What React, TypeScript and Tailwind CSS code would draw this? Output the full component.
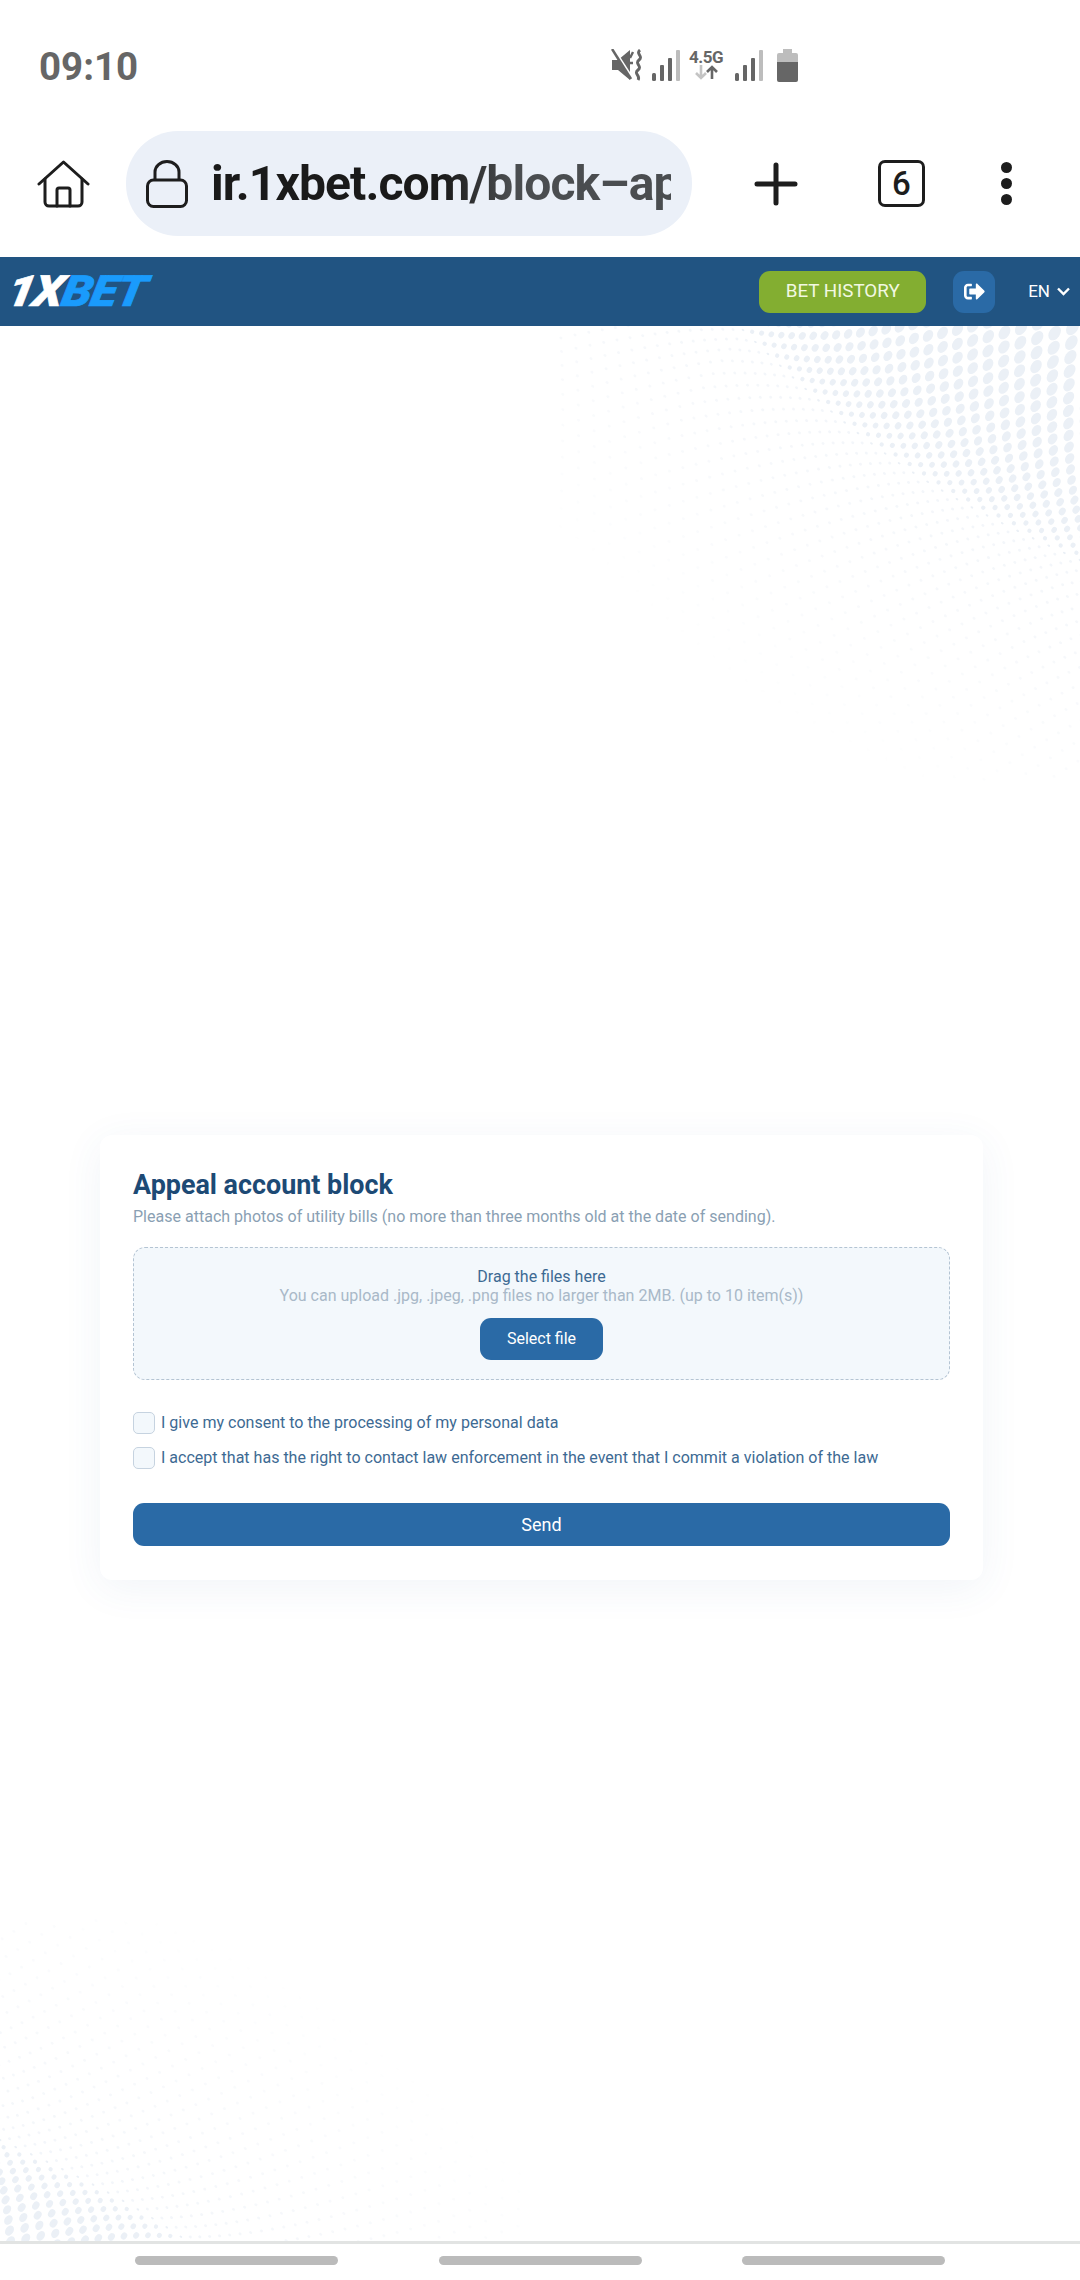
import { FaSignOutAlt } from "react-icons/fa";

type Dot = { x: number; y: number; rs: number; rd: number; o: number };

// halftone wave, one copy in the top right corner, the same one turned round for bottom left
const RIDGE = { x: 743, y: 330, ux: 0.826, uy: 0.564 };
const ANGLE = (Math.atan2(RIDGE.uy, RIDGE.ux) * 180) / Math.PI;

function buildDots() {
  const dots: Dot[] = [];
  for (let j = -26; j <= 26; j++) {
    const n = Math.abs(j);
    const dist = 5 * n + 0.2 * n * n;
    const d = j < 0 ? -dist : dist;
    for (let i = -30; i <= 70; i++) {
      const s = (i + (n % 2 ? 0.5 : 0)) * 17 * (1 + dist / 1500);
      const bend = s > 0 && s < 408 ? 22 * Math.sin((Math.PI * s) / 408) : 0;
      const x = RIDGE.x + s * RIDGE.ux + (d - bend) * RIDGE.uy;
      const y = RIDGE.y + s * RIDGE.uy - (d - bend) * RIDGE.ux;
      if (x < 560 || x > 1090 || y < 316 || y > 780) continue;
      if (j >= 0) {
        dots.push({ x, y, rs: 1.5 + 0.28 * Math.sqrt(dist), rd: 1 + 0.5 * Math.sqrt(dist), o: 1 });
      } else {
        const o = Math.max(0, 0.62 - dist / 480);
        if (o > 0) dots.push({ x, y, rs: 1.6, rd: 1.3, o });
      }
    }
  }
  return dots;
}

const DOTS = buildDots();

function Halftone() {
  const field = DOTS.map((p, k) => (
    <ellipse key={k} cx={p.x} cy={p.y} rx={p.rs} ry={p.rd} opacity={p.o} transform={`rotate(${ANGLE} ${p.x} ${p.y})`} />
  ));
  return (
    <svg className="absolute inset-0 h-full w-full" viewBox="0 326 1080 1915" fill="#ebf0f6">
      <g>{field}</g>
      <g transform="rotate(180 540 1350)">{field}</g>
    </svg>
  );
}

function Signal() {
  return (
    <svg width="28" height="31" viewBox="0 0 28 31">
      <rect x="0" y="23" width="4" height="8" rx="1.5" fill="#666" />
      <rect x="8" y="15" width="4" height="16" rx="1" fill="#666" />
      <rect x="16" y="8" width="4" height="23" rx="1" fill="#666" />
      <rect x="24" y="0" width="4" height="31" rx="1" fill="#bdbdbd" />
    </svg>
  );
}

function StatusIcons() {
  return (
    <div className="ml-[474px] flex items-start">
      <svg width="32" height="32" viewBox="0 0 32 32" className="mt-[-1px]">
        <path d="M1 11h6L19 1v30L7 21H1z" fill="#666" />
        <path d="M3 1l20 31" stroke="#fff" strokeWidth="3" />
        <path d="M1 0l19 30" stroke="#666" strokeWidth="2.6" />
        <path d="M19 9l3-6M19 14h3" stroke="#666" strokeWidth="2.4" />
        <path d="M29 1c-5 4 4 6-1 10s4 6-1 10 3 5 0 10" fill="none" stroke="#666" strokeWidth="3" />
      </svg>
      <div className="ml-[9px]"><Signal /></div>
      <div className="ml-[9px] flex w-[34px] flex-col items-center">
        <span className="text-[17px] leading-[15px] font-bold tracking-[-0.5px] text-[#666]">4.5G</span>
        <svg width="24" height="15" viewBox="0 0 24 15">
          <path d="M7 0v12M2 8l5 5 5-5" fill="none" stroke="#c4c4c4" strokeWidth="2.6" />
          <path d="M18 14V2M13 7l5-5 5 5" fill="none" stroke="#666" strokeWidth="2.6" />
        </svg>
      </div>
      <div className="ml-[12px]"><Signal /></div>
      <svg width="21" height="33" viewBox="0 0 21 33" className="mt-[-1px] ml-[14px]">
        <path d="M6 0h9v4h4a2 2 0 0 1 2 2v8H0V6a2 2 0 0 1 2-2h4z" fill="#bdbdbd" />
        <path d="M0 13h21v18a2 2 0 0 1-2 2H2a2 2 0 0 1-2-2z" fill="#666" />
      </svg>
    </div>
  );
}

function BrowserBar() {
  return (
    <div className="flex h-[147px] items-center">
      <svg width="53" height="48" viewBox="0 0 53 48" className="ml-[37px]" fill="none" stroke="#1d1d1d" strokeWidth="3" strokeLinecap="round" strokeLinejoin="round">
        <path d="M2 24L26.5 2 51 24" />
        <path d="M8 19v23a4 4 0 0 0 4 4h29a4 4 0 0 0 4-4V19" />
        <path d="M20 46V30a2 2 0 0 1 2-2h9a2 2 0 0 1 2 2v16" />
      </svg>
      <div className="ml-[36px] flex h-[105px] w-[566px] items-center overflow-hidden rounded-[52px] bg-[#ebf0f8] pl-[20px]">
        <svg width="42" height="48" viewBox="0 0 42 48" className="shrink-0" fill="none" stroke="#1d1d1d" strokeWidth="3">
          <rect x="1.5" y="20" width="39" height="26.5" rx="6" />
          <path d="M9 20v-8a12 10.5 0 0 1 24 0v8" />
        </svg>
        <div className="ml-[23px] w-[460px] overflow-hidden bg-gradient-to-r from-[#1a1a1a] from-[50%] to-[#4a4d50] to-[65%] bg-clip-text text-[48px] leading-[60px] font-bold tracking-[-0.9px] whitespace-nowrap text-transparent">
          ir.1xbet.com/block–ap
        </div>
      </div>
      <svg width="44" height="44" viewBox="0 0 44 44" className="ml-[62px]" stroke="#1d1d1d" strokeWidth="5" strokeLinecap="round">
        <path d="M22 3v38M3 22h38" />
      </svg>
      <div className="ml-[80px] flex h-[47px] w-[47px] items-center justify-center rounded-[7px] border-[3px] border-[#1d1d1d] text-[33px] leading-none font-medium text-[#1d1d1d]">
        6
      </div>
      <div className="ml-[76px] flex flex-col gap-[5px]">
        <span className="h-[11px] w-[11px] rounded-full bg-[#1d1d1d]" />
        <span className="h-[11px] w-[11px] rounded-full bg-[#1d1d1d]" />
        <span className="h-[11px] w-[11px] rounded-full bg-[#1d1d1d]" />
      </div>
    </div>
  );
}

function SiteHeader() {
  return (
    <header className="flex h-[69px] items-center bg-[#215482] pl-[8px]">
      <div className="flex origin-left scale-x-[1.12] -skew-x-[10deg] text-[43px] leading-none font-black tracking-[-1px] italic [-webkit-text-stroke:0.7px]">
        <span className="text-white">1X</span>
        <span className="text-[#1a9bfc]">BET</span>
      </div>
      <div className="ml-auto flex h-[42px] w-[167px] items-center justify-center rounded-[11px] bg-[#83ae31] text-[18.8px] text-[#f2f8e2]">
        BET HISTORY
      </div>
      <div className="ml-[27px] flex h-[42px] w-[42px] items-center justify-center rounded-[11px] bg-[#2a6aa6] text-white">
        <FaSignOutAlt size={21} />
      </div>
      <span className="ml-[33px] text-[17px] text-white">EN</span>
      <svg width="13" height="9" viewBox="0 0 13 9" className="mr-[10px] ml-[7px]" fill="none" stroke="#fff" strokeWidth="2.4">
        <path d="M1 1.5l5.5 5.5L12 1.5" />
      </svg>
    </header>
  );
}

function Consent({ children }: { children: string }) {
  return (
    <label className="flex h-[21px] items-center">
      <span className="h-[22px] w-[22px] rounded-[5px] border-[1.5px] border-[#c6d3e0] bg-[#f3f8fc]" />
      <span className="ml-[6px] text-[16.05px] leading-[20px] text-[#3d6a93]">{children}</span>
    </label>
  );
}

function AppealCard() {
  return (
    <div className="h-[445px] rounded-[12px] bg-white px-[33px] pt-[32px] shadow-[0_8px_40px_rgba(50,100,160,0.07)]">
      <h1 className="text-[26.9px] leading-[36px] font-bold text-[#1d4a75]">Appeal account block</h1>
      <p className="mt-[3px] text-[16.05px] leading-[22px] text-[#8a9fb3]">
        Please attach photos of utility bills (no more than three months old at the date of sending).
      </p>
      <div className="mt-[19px] flex h-[133px] flex-col items-center rounded-[12px] border border-dashed border-[#b4c4d3] bg-[#f3f8fc] pt-[19px]">
        <p className="text-[16px] leading-[19px] text-[#3d6a93]">Drag the files here</p>
        <p className="text-[16px] leading-[19px] text-[#a9b9c8]">
          You can upload .jpg, .jpeg, .png files no larger than 2MB. (up to 10 item(s))
        </p>
        <button className="mt-[13px] h-[42px] w-[123px] rounded-[11px] bg-[#2a6aa6] text-[16px] text-white">Select file</button>
      </div>
      <div className="mt-[32px] flex flex-col gap-[14px]">
        <Consent>I give my consent to the processing of my personal data</Consent>
        <Consent>I accept that has the right to contact law enforcement in the event that I commit a violation of the law</Consent>
      </div>
      <button className="mt-[35px] h-[43px] w-full rounded-[11px] bg-[#2a6aa6] text-[18px] text-white">Send</button>
    </div>
  );
}

export default function App() {
  return (
    <div className="flex h-[2280px] w-[1080px] flex-col overflow-hidden bg-white font-[Roboto,sans-serif]">
      <div className="flex h-[110px] items-start pt-[44px]">
        <span className="ml-[39px] w-[98px] text-[38.5px] leading-[46px] font-bold text-[#666]">09:10</span>
        <div className="pt-[6px]">
          <StatusIcons />
        </div>
      </div>
      <BrowserBar />
      <SiteHeader />
      <main className="relative h-[1915px] pt-[809px] pr-[97px] pl-[100px]">
        <Halftone />
        <div className="relative">
          <AppealCard />
        </div>
      </main>
      <div className="flex flex-1 justify-between border-t-[3px] border-[#e2e4e3] px-[135px] pt-[12px]">
        <span className="h-[9px] w-[203px] rounded-full bg-[#bbb]" />
        <span className="h-[9px] w-[203px] rounded-full bg-[#bbb]" />
        <span className="h-[9px] w-[203px] rounded-full bg-[#bbb]" />
      </div>
    </div>
  );
}
